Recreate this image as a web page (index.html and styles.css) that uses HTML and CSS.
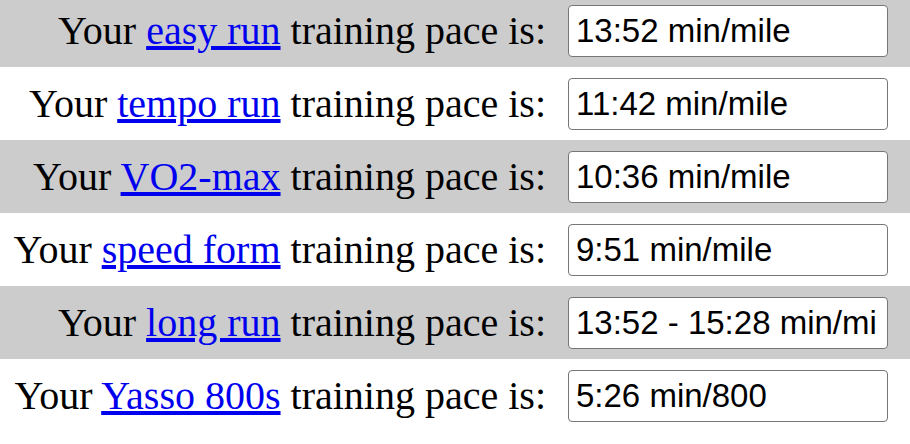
FILE: index.html
```html
<!DOCTYPE html>
<html>
<head>
<meta charset="utf-8">
<link rel="stylesheet" href="styles.css">
</head>
<body>
<div class="paces">
  <div class="row alt">
    <span class="label">Your <a href="#">easy run</a> training pace is:</span>
    <input class="pace" type="text" value="13:52 min/mile" readonly>
  </div>
  <div class="row">
    <span class="label">Your <a href="#">tempo run</a> training pace is:</span>
    <input class="pace" type="text" value="11:42 min/mile" readonly>
  </div>
  <div class="row alt">
    <span class="label">Your <a href="#">VO2-max</a> training pace is:</span>
    <input class="pace" type="text" value="10:36 min/mile" readonly>
  </div>
  <div class="row">
    <span class="label">Your <a href="#">speed form</a> training pace is:</span>
    <input class="pace" type="text" value="9:51 min/mile" readonly>
  </div>
  <div class="row alt">
    <span class="label">Your <a href="#">long run</a> training pace is:</span>
    <input class="pace" type="text" value="13:52 - 15:28 min/mile" readonly>
  </div>
  <div class="row">
    <span class="label">Your <a href="#">Yasso 800s</a> training pace is:</span>
    <input class="pace" type="text" value="5:26 min/800" readonly>
  </div>
</div>
</body>
</html>
```
FILE: styles.css
```css
html, body {
  margin: 0;
  padding: 0;
  background: #ffffff;
}
body {
  width: 910px;
  height: 444px;
  overflow: hidden;
}
.paces {
  margin-top: -6px;
  display: flex;
  flex-direction: column;
}
.row {
  height: 73px;
  display: flex;
  align-items: center;
  justify-content: flex-end;
  gap: 22px;
  padding-right: 22px;
  background: #ffffff;
}
.row.alt {
  background: #cccccc;
}
.label {
  font-family: "Liberation Serif", "Times New Roman", serif;
  font-size: 40px;
  color: #000000;
  white-space: nowrap;
}
.label a {
  color: #0000ee;
  text-decoration: underline;
}
.pace {
  box-sizing: border-box;
  width: 320px;
  height: 52px;
  margin: 0;
  padding: 0 9px 0 7px;
  border: 1px solid #767676;
  border-radius: 4px;
  background: #ffffff;
  font-family: "Liberation Sans", Arial, sans-serif;
  font-size: 33px;
  color: #000000;
  outline: none;
}
```
